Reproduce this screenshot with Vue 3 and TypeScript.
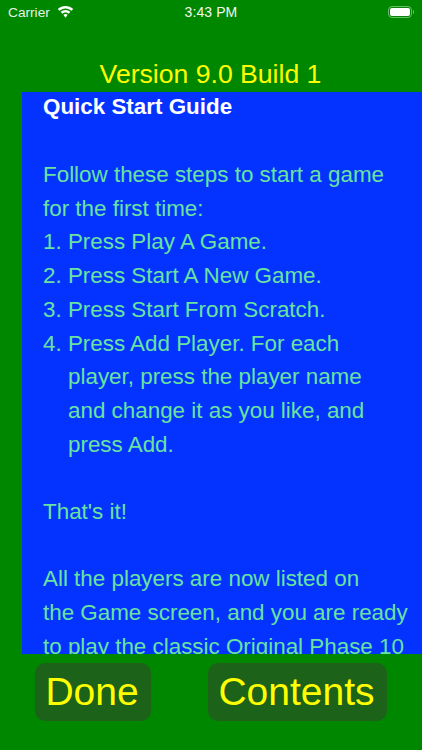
<script setup lang="ts">
const lines: { text: string; cls?: string }[] = [
  { text: 'Quick Start Guide', cls: 'head' },
  { text: '\u00a0' },
  { text: 'Follow these steps to start a game' },
  { text: 'for the first time:' },
  { text: '1. Press Play A Game.' },
  { text: '2. Press Start A New Game.' },
  { text: '3. Press Start From Scratch.' },
  { text: '4. Press Add Player. For each' },
  { text: 'player, press the player name', cls: 'ind' },
  { text: 'and change it as you like, and', cls: 'ind' },
  { text: 'press Add.', cls: 'ind' },
  { text: '\u00a0' },
  { text: "That's it!" },
  { text: '\u00a0' },
  { text: 'All the players are now listed on' },
  { text: 'the Game screen, and you are ready' },
  { text: 'to play the classic Original Phase 10' }
]
</script>

<template>
  <div class="screen">
    <header class="status">
      <div class="left">
        <span>Carrier</span>
        <svg class="wifi" width="17" height="12" viewBox="0 0 18 13">
          <path d="M9 2.600c2.500 0 4.800 1 6.500 2.600l1.900-2C15.100 1.100 12.200 0 9 0S2.900 1.100.6 3.200l1.900 2C4.200 3.600 6.500 2.600 9 2.600z" fill="#fff"/>
          <path d="M9 7c1.300 0 2.500.5 3.400 1.300l1.900-2C12.900 5 11 4.200 9 4.200S5.100 5 3.700 6.300l1.900 2C6.500 7.500 7.700 7 9 7z" fill="#fff"/>
          <path d="M9 8.600c-.9 0-1.700.3-2.300.9L9 12.800l2.300-3.300c-.6-.6-1.400-.9-2.300-.9z" fill="#fff"/>
        </svg>
      </div>
      <span class="time">3:43 PM</span>
      <div class="right">
        <span class="battery"><span class="fill"></span></span>
        <span class="cap"></span>
      </div>
    </header>
    <h1 class="title">Version 9.0 Build 1</h1>
    <main class="panel">
      <p v-for="(l, i) in lines" :key="i" class="line" :class="l.cls">{{ l.text }}</p>
    </main>
    <footer class="actions">
      <button class="btn done">Done</button>
      <button class="btn contents">Contents</button>
    </footer>
  </div>
</template>

<style scoped>
.screen {
  width: 422px;
  height: 750px;
  background: #008700;
  display: flex;
  flex-direction: column;
  overflow: hidden;
  font-family: "Liberation Sans", Arial, sans-serif;
}
.status {
  height: 24px;
  padding: 0 8px;
  display: flex;
  align-items: center;
  justify-content: space-between;
  color: #e6f3e6;
  font-size: 13.700px;
  position: relative;
}
.left { display: flex; align-items: center; gap: 7px; }
.wifi { display: block; margin-top: -1px; }
.time {
  position: absolute;
  left: 184.500px;
  color: #f2f9f2;
  font-size: 14px;
  letter-spacing: 0.1px;
}
.right { display: flex; align-items: center; gap: 1px; }
.battery {
  width: 24px;
  height: 12px;
  border: 1px solid #6fb96f;
  border-radius: 4px;
  padding: 1px;
  box-sizing: border-box;
  display: flex;
}
.fill { flex: 1; background: #fff; border-radius: 2px; }
.cap { width: 1.500px; height: 4px; background: #6fb96f; border-radius: 0 1px 1px 0; }
.title {
  margin: 0;
  height: 68px;
  box-sizing: border-box;
  padding-top: 35px;
  padding-right: 1px;
  text-align: center;
  font-size: 26.600px;
  line-height: 30px;
  font-weight: 400;
  color: #ffff00;
}
.panel {
  margin-left: 22px;
  height: 562px;
  background: #0433ff;
  overflow: hidden;
  padding: 0 0 0 21px;
  box-sizing: border-box;
}
.line {
  margin: 0;
  font-size: 22.400px;
  line-height: 33.700px;
  color: #6ae2a0;
  white-space: nowrap;
}
.head {
  color: #fff;
  font-weight: 700;
  margin-top: -2px;
  margin-bottom: .6px;
}
.ind { padding-left: 25px; }
.actions {
  display: flex;
  padding: 9px 0 0 35px;
  gap: 57px;
}
.btn {
  height: 58px;
  border: 0;
  border-radius: 10px;
  background: #1c6319;
  color: #ffff00;
  font-family: inherit;
  font-size: 39px;
  padding: 0 2px 0 0;
  white-space: nowrap;
}
.done { width: 116px; }
.contents { width: 179px; }
</style>
